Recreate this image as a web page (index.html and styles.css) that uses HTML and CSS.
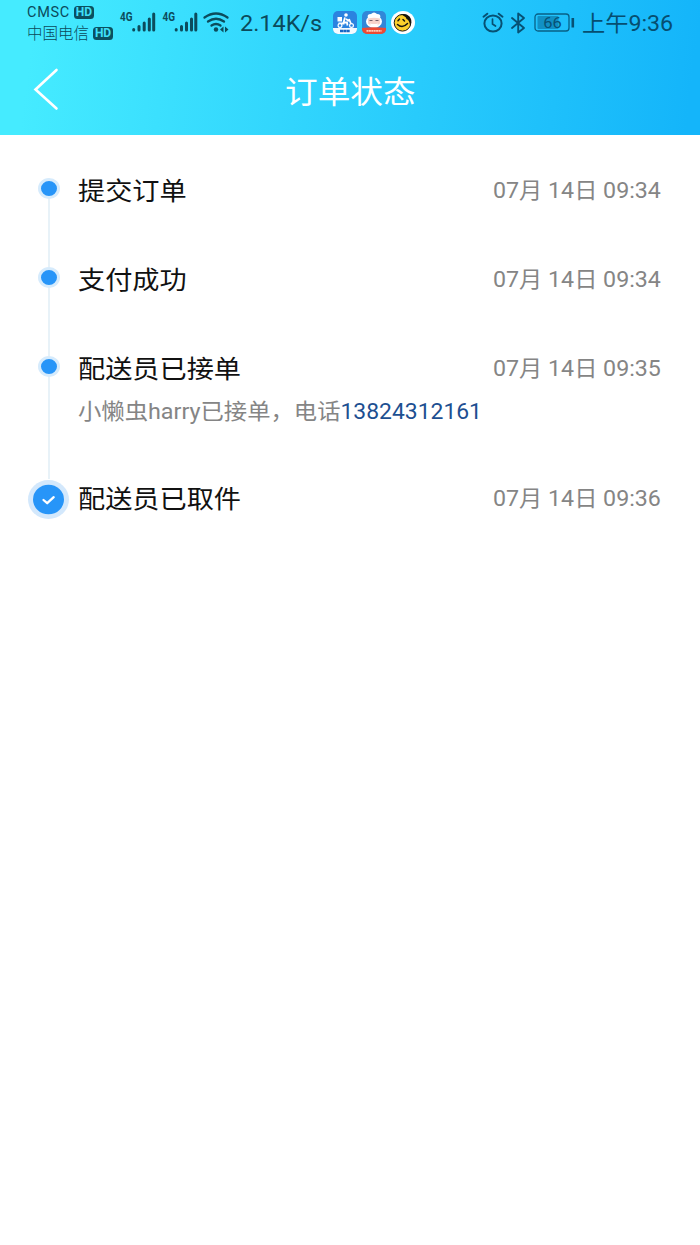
FILE: index.html
```html
<!DOCTYPE html>
<html lang="zh-CN">
<head>
<meta charset="utf-8">
<title>订单状态</title>
<link rel="stylesheet" href="styles.css">
</head>
<body>
<header class="header">
  <div class="status">
    <div class="carriers">
      <div class="carrier"><span class="carrier-name latin">CMSC</span><span class="hd">HD</span></div>
      <div class="carrier"><span class="carrier-name">中国电信</span><span class="hd">HD</span></div>
    </div>
    <svg class="signals" width="112" height="26" viewBox="0 -2 112 26" fill="none" stroke="#0c4c5c" stroke-linecap="round">
      <text class="net" x="1" y="10" textLength="12.500" lengthAdjust="spacingAndGlyphs">4G</text>
      <path stroke-width="3" d="M14.700 18.500v.5M20 15.500V19M25.200 12v7M30.300 8v11M34.700 3V19"/>
      <text class="net" x="43.500" y="10" textLength="12.500" lengthAdjust="spacingAndGlyphs">4G</text>
      <path stroke-width="3" d="M57.200 18.500v.5M62.500 15.500V19M67.500 12v7M72.500 8v11M76.800 3V19"/>
      <path stroke-width="2.300" d="M85.500 6.500Q97 -1.500 108.500 6.500M89 10.500Q97 5 105 10.500M92.500 14.500Q97 11.500 101.500 14.500"/>
      <circle cx="97" cy="18.500" r="2.200" fill="#0c4c5c" stroke="none"/>
      <path d="M104.500 15.500v6l-3.500-3zM106 15.500v6l3.500-3z" fill="#0c4c5c" stroke="none"/>
    </svg>
    <span class="speed"><span class="wide">2.14K/s</span></span>
    <div class="apps">
      <svg width="24" height="23" viewBox="0 0 24 23">
        <rect width="24" height="23" rx="5" fill="#2b83df"/>
        <path d="M0 17h24v1a5 5 0 0 1-5 5H5a5 5 0 0 1-5-5z" fill="#f4fbff"/>
        <rect x="4.500" y="6" width="4.500" height="4.500" fill="#fff"/>
        <circle cx="13" cy="4" r="1.800" fill="#fff"/>
        <path d="M12 6.500l-1.500 5h3.500l.5 3M13 8l3 2M16 8l2.500 6M5.500 12.500h6" stroke="#fff" stroke-width="1.800" fill="none"/>
        <circle cx="7" cy="14.500" r="1.900" fill="#2b83df" stroke="#fff" stroke-width="1.200"/>
        <circle cx="18.500" cy="14.500" r="1.900" fill="#2b83df" stroke="#fff" stroke-width="1.200"/>
        <path d="M7 20h10" stroke="#1766c4" stroke-width="2.400" stroke-dasharray="3 .3"/>
      </svg>
      <svg width="24" height="23" viewBox="0 0 24 23">
        <rect width="24" height="23" rx="5" fill="#3187d8"/>
        <ellipse cx="12" cy="10.500" rx="8" ry="6.500" fill="#fff"/>
        <path d="M6 7Q4.500 3 9 3 12 0 15 3 19.500 3 18 7z" fill="#fff"/>
        <path d="M6 7.500q6-1.500 12 0v5q-6 5-12 0z" fill="#f7d3cb"/>
        <path d="M7.500 9.500h3M13.500 9.500h3" stroke="#77606a"/>
        <path d="M8 12.500q4 1 8 0-1 4-4 4t-4-4z" fill="#fff"/>
        <path d="M0 17q12-1.500 24 0v1a5 5 0 0 1-5 5H5a5 5 0 0 1-5-5z" fill="#ed4b35"/>
        <path d="M4.500 19.800h15" stroke="#ffc9b7" stroke-width="1.700" stroke-dasharray="2 .4"/>
      </svg>
      <svg width="24" height="23" viewBox="0 0 24 23">
        <ellipse cx="12" cy="11.500" rx="12" ry="11.500" fill="#fff"/>
        <circle cx="11.500" cy="11.800" r="8.300" fill="#fbd02c" stroke="#1d1b12" stroke-width="1"/>
        <path d="M9 3.500Q15 2 18.500 5.500 22 10 19 14.500 18.500 9 15.500 8 15 5 9 3.500z" fill="#17150f"/>
        <path d="M6.500 13.500q5 4.500 10-1M7 9.800l1.500-1.800M12 8.500l1.500 1.500" stroke="#17150f" stroke-width="1.500" fill="none" stroke-linecap="round"/>
      </svg>
    </div>
    <div class="right">
      <svg width="22" height="22" viewBox="0 0 22 22" fill="none" stroke="#075174" stroke-width="2" stroke-linecap="round">
        <ellipse cx="11" cy="11.500" rx="8.600" ry="8.100"/>
        <path d="M1.500 4.700l3.800-3M20.500 4.700l-3.800-3"/><path d="M10.500 7v5l3 2" stroke-width="1.700"/>
      </svg>
      <svg width="16" height="22" viewBox="0 0 16 22" fill="none" stroke="#075174" stroke-width="1.900" stroke-linejoin="round" stroke-linecap="round">
        <path d="M2 6l12 10-5.800 4.500v-19L14 6 2 16"/>
      </svg>
      <svg class="cell" width="41" height="20" viewBox="0 0 41 20">
        <rect x="1" y="1" width="34" height="17" rx="3" fill="none" stroke="#086086" stroke-width="1.300"/>
        <rect x="3.500" y="3" width="21" height="13" rx="1" fill="#1190c4"/>
        <path d="M38.800 5v9.500" stroke="#075174" stroke-width="2.600"/>
        <text class="battery" x="18.500" y="15" text-anchor="middle" textLength="18.500" lengthAdjust="spacingAndGlyphs">66</text>
      </svg>
    </div>
    <span class="clock"><span class="wide">上午9:36</span></span>
  </div>
  <div class="nav">
    <svg class="back" width="28" height="44" viewBox="0 0 28 44" fill="none" stroke="#fff" stroke-width="2.600" stroke-linecap="round"><path d="M24.500 3L3.500 22.500 24.500 41.500"/></svg>
    <h1 class="title"><span class="wide">订单状态</span></h1>
  </div>
</header>
<main class="timeline">
  <section class="step">
    <div class="rail"><i class="dot"></i><i class="line"></i></div>
    <div class="body"><div class="row"><h2 class="name wide">提交订单</h2><time class="time wide">07月 14日 09:34</time></div></div>
  </section>
  <section class="step">
    <div class="rail"><i class="dot"></i><i class="line"></i></div>
    <div class="body"><div class="row"><h2 class="name wide">支付成功</h2><time class="time wide">07月 14日 09:34</time></div></div>
  </section>
  <section class="step tall">
    <div class="rail"><i class="dot"></i><i class="line"></i></div>
    <div class="body"><div class="row"><h2 class="name wide">配送员已接单</h2><time class="time wide">07月 14日 09:35</time></div>
    <p class="note wide">小懒虫harry已接单，电话<a class="phone">13824312161</a></p></div>
  </section>
  <section class="step current">
    <div class="rail">
      <svg width="42" height="40" viewBox="0 0 42 40"><ellipse cx="20.500" cy="20.500" rx="20.500" ry="19.500" fill="#d3e8fc"/><ellipse cx="20.500" cy="20.500" rx="15.500" ry="14.700" fill="#2795f8"/><path d="M15.500 21l3.700 3.200 6.500-6" fill="none" stroke="#fff" stroke-width="2.300" stroke-linecap="round" stroke-linejoin="round"/></svg>
    </div>
    <div class="body"><div class="row"><h2 class="name wide">配送员已取件</h2><time class="time wide">07月 14日 09:36</time></div></div>
  </section>
</main>
</body>
</html>
```
FILE: styles.css
```css
* { box-sizing: border-box; }
body {
  margin: 0;
  min-height: 1245px;
  background: #fff;
  font-family: Roboto, "Noto Sans CJK SC", sans-serif;
}
h1, h2, p { margin: 0; font-weight: 400; }
svg { display: block; flex: none; overflow: visible; }
/* The interface type is set slightly wider than its natural proportions. */
.wide { display: inline-block; white-space: nowrap; transform: scaleX(1.07); transform-origin: left center; }

.header {
  height: 135px;
  background: linear-gradient(97deg, #45ebff 5%, #14b5fa 98%);
}
.status {
  display: flex;
  align-items: center;
  height: 46px;
  padding-left: 27px;
  color: #0b4a5b;
}
.carriers { width: 92px; display: flex; flex-direction: column; gap: 1px; }
.carrier { display: flex; align-items: center; gap: 4px; height: 20px; white-space: nowrap; }
.carrier-name { font-weight: 300; font-size: 15.500px; line-height: 18px; }
.latin { font-size: 14.500px; letter-spacing: .7px; font-weight: 400; }
.hd {
  width: 20px; height: 13px; border-radius: 3.500px;
  background: #0b5060; color: #3fe0fa;
  font: 700 12px/13px Roboto, sans-serif; text-align: center;
}
.signals { margin-top: -3px; }
.net { font: 700 12.500px/1 Roboto, sans-serif; fill: #0c4c5c; stroke: none; }
.speed { margin-left: 9px; width: 93px; font-size: 21.900px; }
.apps { display: flex; gap: 5px; width: 149px; margin-top: -2px; }
.right { display: flex; align-items: center; gap: 6px; width: 98px; }
.cell { margin-left: 2px; }
.battery { font: 400 15px Roboto, sans-serif; fill: #075174; }
.clock { font-size: 21.700px; color: #064e70; margin: -4px 0 0 2px; }

.nav { display: flex; align-items: center; height: 89px; padding-left: 32px; }
.back { margin-top: -3px; }
.title { margin: 4px 0 0 225px; font-size: 30.500px; line-height: 44px; color: #fff; }

.timeline { padding: 43px 0 0 28px; }
.step { display: flex; height: 89px; }
.tall { height: 123px; }
.current { height: 42px; }
.rail { width: 42px; display: flex; flex-direction: column; align-items: center; }
.dot {
  flex: none; width: 22px; height: 21px; border-radius: 50%;
  background: #2795f8; border: 3px solid #d6ebfc;
}
.line { flex: 1; width: 2px; background: #e8f2f8; }
.body { flex: 1; padding: 0 39px 0 8px; }
.row { display: flex; justify-content: space-between; align-items: center; height: 21px; }
.current .row { height: 35px; }
.name { font-size: 25.400px; color: #111; }
.time { font-size: 21.700px; color: #858585; transform-origin: right center; margin-top: -1px; }
.note { margin-top: 19px; font-size: 21.800px; line-height: 32px; color: #858585; }
.phone { font-size: 21.400px; color: #1d4f91; }
```
